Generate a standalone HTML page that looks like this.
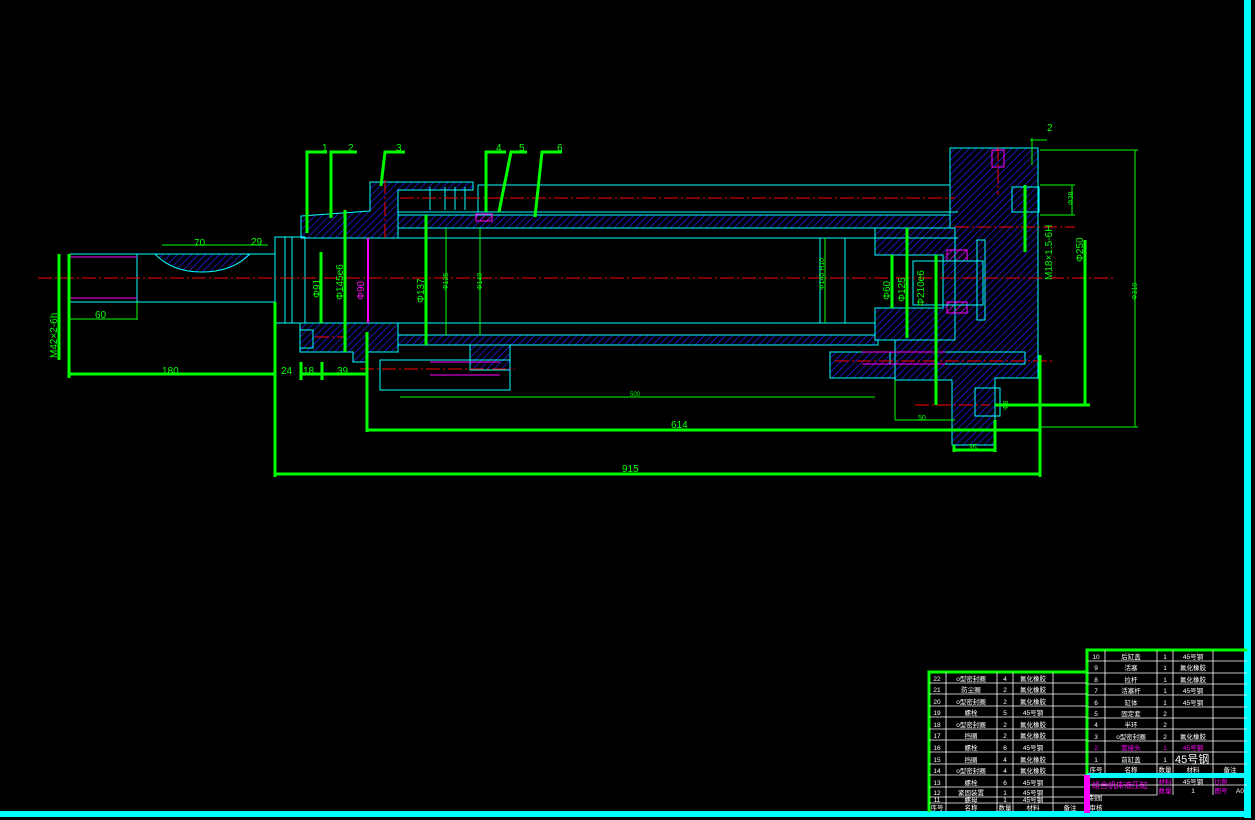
<!DOCTYPE html>
<html><head><meta charset="utf-8"><style>
html,body{margin:0;padding:0;background:#000;}
svg{display:block}
text{font-family:"Liberation Sans","Noto Sans CJK SC",sans-serif;}
</style></head><body>
<svg width="1255" height="820" viewBox="0 0 1255 820" xmlns="http://www.w3.org/2000/svg">
<defs>
<pattern id="h" width="5" height="5" patternUnits="userSpaceOnUse" patternTransform="rotate(45)">
<rect width="5" height="5" fill="#000"/><line x1="0" y1="0" x2="0" y2="5" stroke="#2222ff" stroke-width="1.4"/>
</pattern>
<pattern id="hm" width="5" height="5" patternUnits="userSpaceOnUse" patternTransform="rotate(45)">
<line x1="0" y1="0" x2="0" y2="5" stroke="#ff00ff" stroke-width="1.2"/>
</pattern>
</defs>
<rect width="1255" height="820" fill="#000"/>

<rect x="1244" y="0" width="7" height="818" fill="#00ffff"/>
<rect x="0" y="811" width="1251" height="6" fill="#00ffff"/>

<g fill="url(#h)" stroke="#00ffff" stroke-width="1">
<rect x="398" y="215" width="560" height="13"/>
<rect x="398" y="335" width="480" height="10"/>
<path d="M301 216 L370 211 L370 182 L473 182 L473 190 L398 190 L398 238 L301 238 Z"/>
<path d="M300 323 L398 323 L398 352 L367 352 L367 362 L353 362 L353 352 L300 352 Z"/>
<path d="M950 148 L1038 148 L1038 378 L995 378 L995 445 L952 445 L952 380 L895 380 L895 352 L830 352 L830 378 L895 378 L895 335 L955 335 L955 228 L950 228 Z"/>
<path d="M875 228 L955 228 L955 340 L875 340 L875 308 L943 308 L943 255 L875 255 Z"/>
<path d="M155 254 L250 254 Q232 272 202 272 Q172 272 155 254 Z"/>
<path d="M470 345 L510 345 L510 370 L470 370 Z"/>
</g>
<g fill="url(#hm)" stroke="#ff00ff" stroke-width="1">
<rect x="476" y="214" width="16" height="7"/>
<rect x="947" y="250" width="20" height="11"/>
<rect x="947" y="302" width="20" height="11"/>
</g>

<g fill="none" stroke="#00ffff" stroke-width="1">
<path d="M70 254 L275 254 M70 302 L275 302 M70 254 L70 302 M137 254 L137 302"/>
<rect x="275" y="237" width="30" height="86"/>
<path d="M285 237 L285 323 M292 237 L292 323"/>
<path d="M398 238 L958 238 M398 323 L875 323 M398 212 L958 212 M478 185 L950 185 M478 185 L478 212"/>
<path d="M430 187 L430 210 M445 187 L445 210 M455 187 L455 210 M465 187 L465 210"/>
<path d="M820 238 L820 323 M845 238 L845 323"/>
<rect x="913" y="261" width="70" height="44"/>
<rect x="977" y="240" width="8" height="80"/>
<rect x="300" y="330" width="13" height="18"/>
<rect x="380" y="360" width="130" height="30"/>
<rect x="1012" y="187" width="27" height="25"/>
<rect x="975" y="388" width="25" height="28"/>
<rect x="890" y="352" width="135" height="12"/>
</g>
<g stroke="#ff00ff" stroke-width="1">
<path d="M70 257 L137 257 M70 298 L137 298"/>
<path d="M430 362 L500 362 M430 375 L500 375 M862 352 L945 352 M862 364 L945 364"/>
<rect x="992" y="150" width="12" height="17" fill="none"/>
</g>

<g stroke="#ff0000" stroke-width="1" stroke-dasharray="14 3 2 3">
<line x1="38" y1="278" x2="1115" y2="278"/>
<line x1="400" y1="198" x2="955" y2="198"/>
<line x1="315" y1="337" x2="345" y2="337"/>
<line x1="360" y1="369" x2="515" y2="369"/>
<line x1="835" y1="361" x2="1055" y2="361"/>
<line x1="955" y1="227" x2="1075" y2="227"/>
<line x1="915" y1="405" x2="990" y2="405"/>
<line x1="998" y1="147" x2="998" y2="195"/>
<line x1="385" y1="180" x2="385" y2="240"/>
</g>

<g stroke="#00ff00" stroke-width="3" fill="none">
<path d="M69 254 L69 378 M69 374 L275 374 M275 302 L275 477 M275 474 L1040 474"/>
<path d="M367 332 L367 432 M367 430 L1040 430 M1040 355 L1040 477"/>
<path d="M301 374 L367 374 M301 362 L301 380 M322 362 L322 380"/>
<path d="M59 254 L59 360"/>
<path d="M321 252 L321 323 M345 210 L345 352 M426 215 L426 345 M907 228 L907 338 M892 255 L892 308 M936 255 L936 405"/>
<path d="M1085 240 L1085 405 M995 405 L1090 405 M1025 185 L1025 252"/>
<path d="M307 233 L307 152 L327 152 M331 218 L331 152 L357 152 M381 186 L385 152 L405 152 M486 212 L486 152 L506 152 M499 212 L511 152 L527 152 M535 217 L542 152 L562 152"/>
<path d="M954 445 L954 452 M995 420 L995 452 M955 450 L995 450"/>
</g>
<rect x="367" y="238" width="2" height="85" fill="#ff00ff"/>

<g stroke="#00ff00" stroke-width="1" fill="none">
<path d="M137 302 L137 320 M70 319 L137 319 M162 245 L240 245 M240 245 L268 245"/>
<path d="M446 228 L446 335 M480 228 L480 335 M400 397 L875 397 M825 238 L825 323"/>
<path d="M1040 150 L1138 150 M1135 150 L1135 427 M1040 427 L1138 427 M1040 185 L1075 185 M1072 185 L1072 215 M1040 215 L1075 215"/>
<path d="M895 420 L955 420 M895 380 L895 420 M1030 140 L1047 140 M1032 138 L1032 165"/>
</g>

<g fill="#00ff00" font-size="10">
<text x="322" y="151">1</text><text x="348" y="151">2</text><text x="396" y="151">3</text>
<text x="496" y="151">4</text><text x="519" y="151">5</text><text x="557" y="151">6</text>
<text x="1047" y="131">2</text>
<text x="194" y="246">70</text><text x="251" y="245">29</text>
<text x="95" y="318">60</text><text x="162" y="374">180</text>
<text x="281" y="374">24</text><text x="303" y="374">18</text><text x="337" y="374">39</text>
<text x="671" y="428">614</text><text x="622" y="472">915</text>
<text x="630" y="396" font-size="6">500</text>
<text x="918" y="420" font-size="7">50</text><text x="968" y="450" font-size="8">35</text>
<text transform="translate(320 298) rotate(-90)" font-size="10">Φ91</text>
<text transform="translate(343 300) rotate(-90)" font-size="10">Φ145e6</text>
<text transform="translate(424 303) rotate(-90)" font-size="10">Φ137</text>
<text transform="translate(448 290) rotate(-90)" font-size="7">Φ125</text>
<text transform="translate(482 290) rotate(-90)" font-size="7">Φ140</text>
<text transform="translate(824 290) rotate(-90)" font-size="7">Φ140 H10</text>
<text transform="translate(890 300) rotate(-90)" font-size="10">Φ60</text>
<text transform="translate(905 302) rotate(-90)" font-size="10">Φ125</text>
<text transform="translate(924 306) rotate(-90)" font-size="10">Φ210e6</text>
<text transform="translate(1083 262) rotate(-90)" font-size="10">Φ250</text>
<text transform="translate(1137 300) rotate(-90)" font-size="7">Φ310</text>
<text transform="translate(1052 280) rotate(-90)" font-size="10">M18×1.5-6H</text>
<text transform="translate(57 358) rotate(-90)" font-size="10">M42×2-6h</text>
<text transform="translate(1073 205) rotate(-90)" font-size="7">Φ38</text>
<text transform="translate(1008 410) rotate(-90)" font-size="7">Φ8</text>
</g>
<text transform="translate(364 300) rotate(-90)" fill="#ff00ff" font-size="10">Φ90</text>

<g stroke="#00ff00" stroke-width="3" fill="none">
<path d="M929 812 L929 672 L1087 672 M1087 812 L1087 650 L1247 650"/>
</g>
<g stroke="#ffffff" stroke-width="0.8" fill="none">
<path d="M929 683 H1087 M929 694 H1087 M929 706 H1087 M929 717 H1087 M929 729 H1087 M929 740 H1087 M929 752 H1087 M929 764 H1087 M929 775 H1087 M929 787 H1087 M929 797 H1087 M929 803 H1087"/>
<path d="M946 672 V812 M997 672 V812 M1013 672 V812 M1053 672 V812"/>
<path d="M1087 661 H1247 M1087 673 H1247 M1087 684 H1247 M1087 695 H1247 M1087 707 H1247 M1087 718 H1247 M1087 729 H1247 M1087 741 H1247 M1087 752 H1247 M1087 764 H1247"/>
<path d="M1105 650 V775 M1157 650 V795 M1173 650 V795 M1213 650 V795 M1087 785 H1247 M1087 795 H1157"/>
</g>
<rect x="1087" y="773" width="160" height="5" fill="#00ffff"/>
<rect x="1084" y="775" width="6" height="38" fill="#ff00ff"/>
<g fill="#ffffff" font-size="6.5" text-anchor="middle">
<text x="937" y="681">22</text><text x="971" y="681">o型密封圈</text><text x="1005" y="681">4</text><text x="1033" y="681">氟化橡胶</text>
<text x="937" y="692">21</text><text x="971" y="692">防尘圈</text><text x="1005" y="692">2</text><text x="1033" y="692">氟化橡胶</text>
<text x="937" y="704">20</text><text x="971" y="704">o型密封圈</text><text x="1005" y="704">2</text><text x="1033" y="704">氟化橡胶</text>
<text x="937" y="715">19</text><text x="971" y="715">螺栓</text><text x="1005" y="715">5</text><text x="1033" y="715">45号钢</text>
<text x="937" y="727">18</text><text x="971" y="727">o型密封圈</text><text x="1005" y="727">2</text><text x="1033" y="727">氟化橡胶</text>
<text x="937" y="738">17</text><text x="971" y="738">挡圈</text><text x="1005" y="738">2</text><text x="1033" y="738">氟化橡胶</text>
<text x="937" y="750">16</text><text x="971" y="750">螺栓</text><text x="1005" y="750">6</text><text x="1033" y="750">45号钢</text>
<text x="937" y="762">15</text><text x="971" y="762">挡圈</text><text x="1005" y="762">4</text><text x="1033" y="762">氟化橡胶</text>
<text x="937" y="773">14</text><text x="971" y="773">o型密封圈</text><text x="1005" y="773">4</text><text x="1033" y="773">氟化橡胶</text>
<text x="937" y="785">13</text><text x="971" y="785">螺栓</text><text x="1005" y="785">6</text><text x="1033" y="785">45号钢</text>
<text x="937" y="795">12</text><text x="971" y="795">紧固装置</text><text x="1005" y="795">1</text><text x="1033" y="795">45号钢</text>
<text x="937" y="802">11</text><text x="971" y="802">螺母</text><text x="1005" y="802">1</text><text x="1033" y="802">45号钢</text>
<text x="937" y="810">序号</text><text x="971" y="810">名称</text><text x="1005" y="810">数量</text><text x="1033" y="810">材料</text><text x="1070" y="810">备注</text>
<text x="1096" y="659">10</text><text x="1131" y="659">后缸盖</text><text x="1165" y="659">1</text><text x="1193" y="659">45号钢</text>
<text x="1096" y="670">9</text><text x="1131" y="670">活塞</text><text x="1165" y="670">1</text><text x="1193" y="670">氟化橡胶</text>
<text x="1096" y="682">8</text><text x="1131" y="682">拉杆</text><text x="1165" y="682">1</text><text x="1193" y="682">氟化橡胶</text>
<text x="1096" y="693">7</text><text x="1131" y="693">活塞杆</text><text x="1165" y="693">1</text><text x="1193" y="693">45号钢</text>
<text x="1096" y="705">6</text><text x="1131" y="705">缸体</text><text x="1165" y="705">1</text><text x="1193" y="705">45号钢</text>
<text x="1096" y="716">5</text><text x="1131" y="716">固定套</text><text x="1165" y="716">2</text>
<text x="1096" y="727">4</text><text x="1131" y="727">半环</text><text x="1165" y="727">2</text>
<text x="1096" y="739">3</text><text x="1131" y="739">o型密封圈</text><text x="1165" y="739">2</text><text x="1193" y="739">氟化橡胶</text>
<text x="1096" y="762">1</text><text x="1131" y="762">前缸盖</text><text x="1165" y="762">1</text>
<text x="1096" y="772">序号</text><text x="1131" y="772">名称</text><text x="1165" y="772">数量</text><text x="1193" y="772">材料</text><text x="1230" y="772">备注</text>
<text x="1193" y="784">45号钢</text><text x="1193" y="793">1</text><text x="1240" y="793">A0</text>
<text x="1096" y="800">制图</text><text x="1096" y="810">审核</text>
</g>
<g fill="#ff00ff" font-size="6.5" text-anchor="middle">
<text x="1096" y="750">2</text><text x="1131" y="750">管接头</text><text x="1165" y="750">1</text><text x="1193" y="750">45号钢</text>
<text x="1165" y="784">材料</text><text x="1165" y="793">数量</text><text x="1221" y="784">比例</text><text x="1221" y="793">图号</text>
<text x="1120" y="788" font-size="8">组合机床液压缸</text>
</g>
<text x="1175" y="763" fill="#fff" font-size="11">45号钢</text>
</svg>
</body></html>
